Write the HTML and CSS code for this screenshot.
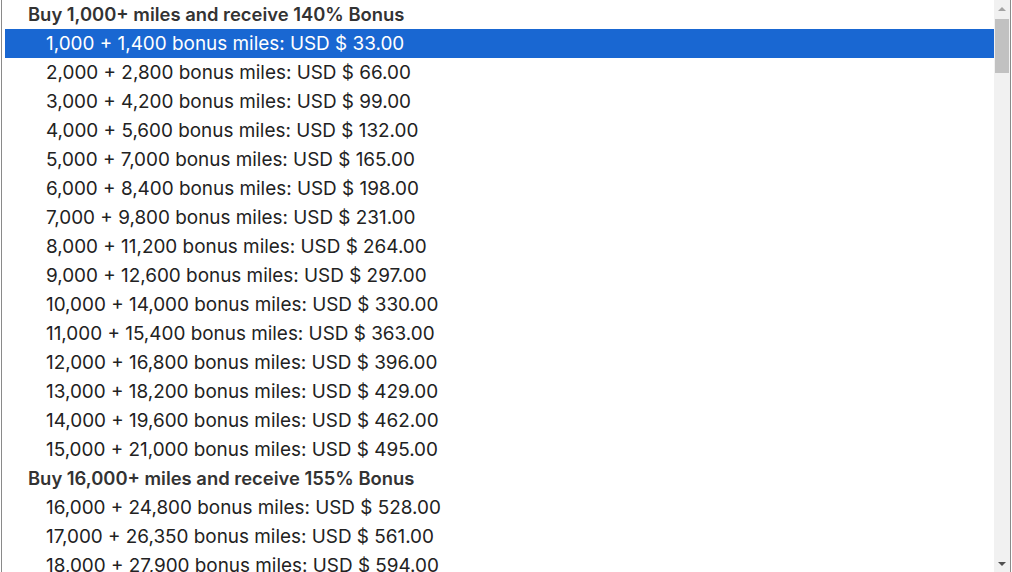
FILE: index.html
```html
<!DOCTYPE html>
<html>
<head>
<meta charset="utf-8">
<link rel="stylesheet" href="styles.css">
</head>
<body>
<div class="listbox">
  <div class="list">
    <div class="group">Buy 1,000+ miles and receive 140% Bonus</div>
    <div class="opt selected">1,000 + 1,400 bonus miles: USD $ 33.00</div>
    <div class="opt">2,000 + 2,800 bonus miles: USD $ 66.00</div>
    <div class="opt">3,000 + 4,200 bonus miles: USD $ 99.00</div>
    <div class="opt">4,000 + 5,600 bonus miles: USD $ 132.00</div>
    <div class="opt">5,000 + 7,000 bonus miles: USD $ 165.00</div>
    <div class="opt">6,000 + 8,400 bonus miles: USD $ 198.00</div>
    <div class="opt">7,000 + 9,800 bonus miles: USD $ 231.00</div>
    <div class="opt">8,000 + 11,200 bonus miles: USD $ 264.00</div>
    <div class="opt">9,000 + 12,600 bonus miles: USD $ 297.00</div>
    <div class="opt">10,000 + 14,000 bonus miles: USD $ 330.00</div>
    <div class="opt">11,000 + 15,400 bonus miles: USD $ 363.00</div>
    <div class="opt">12,000 + 16,800 bonus miles: USD $ 396.00</div>
    <div class="opt">13,000 + 18,200 bonus miles: USD $ 429.00</div>
    <div class="opt">14,000 + 19,600 bonus miles: USD $ 462.00</div>
    <div class="opt">15,000 + 21,000 bonus miles: USD $ 495.00</div>
    <div class="group">Buy 16,000+ miles and receive 155% Bonus</div>
    <div class="opt">16,000 + 24,800 bonus miles: USD $ 528.00</div>
    <div class="opt">17,000 + 26,350 bonus miles: USD $ 561.00</div>
    <div class="opt">18,000 + 27,900 bonus miles: USD $ 594.00</div>
  </div>
  <div class="scrollbar">
    <div class="arrow up"></div>
    <div class="track"><div class="thumb"></div></div>
    <div class="arrow down"></div>
  </div>
</div>
</body>
</html>
```

FILE: styles.css
```css
html, body {
  margin: 0;
  padding: 0;
  background: #fff;
  overflow: hidden;
}
.listbox {
  display: flex;
  height: 574px;
  margin-left: 1px;
  margin-top: -1px;
  width: 1010px;
  border: 1px solid #8a8a8a;
  box-sizing: border-box;
  font-family: "Inter", "Liberation Sans", sans-serif;
  font-size: 18.9px;
  color: #222;
}
.list {
  flex: 1;
  overflow: hidden;
  padding-left: 3px;
}
.group, .opt {
  height: 29px;
  line-height: 29px;
  white-space: nowrap;
}
.group {
  padding-left: 23px;
  font-weight: 600;
  font-size: 18.4px;
  color: #333;
}
.opt {
  padding-left: 41px;
}
.selected {
  background: #1967d2;
  color: #fff;
}
.scrollbar {
  width: 16px;
  background: #f1f1f1;
  display: flex;
  flex-direction: column;
  align-items: center;
}
.arrow {
  height: 17px;
  width: 16px;
  display: flex;
  align-items: center;
  justify-content: center;
}
.arrow.up::before {
  content: "";
  border-left: 4px solid transparent;
  border-right: 4px solid transparent;
  border-bottom: 4px solid #a3a3a3;
}
.arrow.down::before {
  content: "";
  border-left: 4px solid transparent;
  border-right: 4px solid transparent;
  border-top: 4px solid #505050;
}
.track {
  flex: 1;
  width: 100%;
}
.thumb {
  margin: 2px 1px 0 1px;
  height: 54px;
  background: #c1c1c1;
}
```
